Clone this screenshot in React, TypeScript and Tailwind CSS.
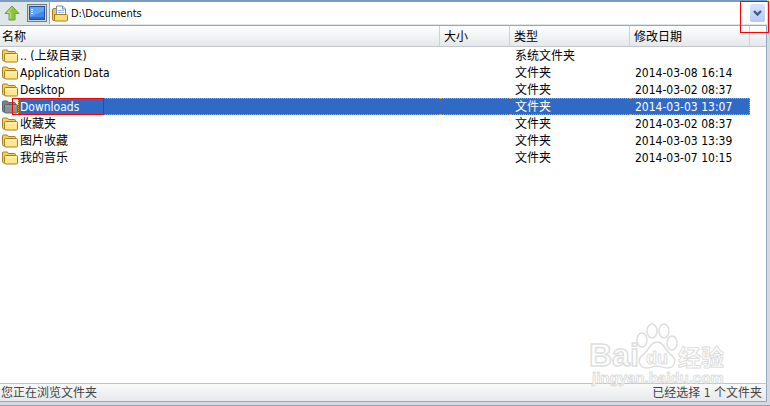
import React, { useState } from 'react';
import clsx from 'clsx';

interface Entry {
    name: string;
    type: string;
    modified?: string;
}

const ENTRIES: Entry[] = [
    { name: '.. (上级目录)', type: '系统文件夹' },
    { name: 'Application Data', type: '文件夹', modified: '2014-03-08 16:14' },
    { name: 'Desktop', type: '文件夹', modified: '2014-03-02 08:37' },
    { name: 'Downloads', type: '文件夹', modified: '2014-03-03 13:07' },
    { name: '收藏夹', type: '文件夹', modified: '2014-03-02 08:37' },
    { name: '图片收藏', type: '文件夹', modified: '2014-03-03 13:39' },
    { name: '我的音乐', type: '文件夹', modified: '2014-03-07 10:15' },
];

const UpIcon = () => (
    <svg width="16" height="16" viewBox="0 0 16 16">
        <path d="M8 1 L15 8.5 H11 V15 H5 V8.5 H1 Z" fill="#8cc63a" stroke="#6f9a3a" strokeLinejoin="round" />
        <path d="M8 2.6 L3.4 7.5 H6.2 V13.8" fill="none" stroke="#c6e58c" />
    </svg>
);

const DesktopIcon = () => (
    <svg width="20" height="18" viewBox="0 0 20 18">
        <rect x="0.5" y="0.5" width="19" height="17" fill="#d4d4d0" stroke="#77797b" />
        <rect x="2.5" y="2.5" width="15" height="13" fill="#3f8ae6" stroke="#1d4fa6" />
        <path d="M3 3 H17 V7 L3 13 Z" fill="#62a6f2" />
        <path d="M4 5.5 H6 M4 7.5 H6 M4 9.5 H6" stroke="#ffffff" />
        <path d="M3 14 H17" stroke="#1d4fa6" />
    </svg>
);

const DocumentsIcon = () => (
    <svg width="16" height="17" viewBox="0 0 16 17">
        <path d="M0.5 14 V5 Q0.5 3.5 2 3.5 H5 V15.5 H2 Q0.5 15.5 0.5 14 Z" fill="#f4c64c" stroke="#ad7a14" />
        <path d="M4.5 1 H10.5 L13.5 4 V11 H4.5 Z" fill="#ffffff" stroke="#6d8fc0" />
        <path d="M10.5 1 V4 H13.5" fill="#cfe0f5" stroke="#6d8fc0" />
        <path d="M6 5.5 H12 M6 7.5 H12" stroke="#9dbbe2" />
        <path d="M2.5 9.5 H14.5 Q15.5 9.5 15.5 10.5 V15 Q15.5 16 14.5 16 H3.5 Q2.5 16 2.5 15 Z" fill="#fbdf80" stroke="#ad7a14" />
    </svg>
);

const FolderIcon: React.FC<{ dimmed?: boolean }> = ({ dimmed }) => {
    const line = dimmed ? '#59656c' : '#a87f1c';
    return (
        <svg width="16" height="14" viewBox="0 0 16 14" className="shrink-0">
            <path
                d="M0.5 10.5 V2 Q0.5 1 1.5 1 H5 Q6 1 6.3 2.5 H12.5 Q13.5 2.5 13.5 3.5 V12 H2 Q0.5 12 0.5 10.5 Z"
                fill={dimmed ? '#77868d' : '#f6d05c'}
                stroke={line}
            />
            <path
                d="M3.5 4.5 H14.5 Q15.5 4.5 15.5 5.5 V12 Q15.5 13 14.5 13 H4 Q2.5 13 2.5 11.5 V5.5 Q2.5 4.5 3.5 4.5 Z"
                fill={dimmed ? '#84949b' : '#fde88f'}
                stroke={line}
            />
            <path d="M3.5 6 H14.5" stroke={dimmed ? '#94a3a9' : '#fff8cc'} />
        </svg>
    );
};

const Watermark = () => (
    <svg
        width="144"
        height="72"
        viewBox="0 0 144 72"
        className="pointer-events-none absolute right-[38px] bottom-[14px]"
        fill="#ffffff"
        stroke="#dedede"
        strokeWidth="1.5"
        strokeLinejoin="round"
        fontFamily="'Liberation Sans', 'Noto Sans CJK SC', sans-serif"
        fontWeight="bold"
    >
        <text x="4" y="46" fontSize="32">Bai</text>
        <ellipse cx="57" cy="20" rx="5" ry="7" />
        <ellipse cx="67" cy="11" rx="5" ry="7" />
        <ellipse cx="79" cy="11" rx="5" ry="7" />
        <ellipse cx="87" cy="23" rx="5" ry="7" />
        <path d="M72 22 C79 22 80 30 85 34 C93 39 90 48 82 48 C77 48 76 46 72 46 C68 46 67 48 62 48 C54 48 51 39 59 34 C64 30 65 22 72 22 Z" />
        <text x="61" y="44" fontSize="18" strokeWidth="1">du</text>
        <text x="93" y="46" fontSize="23" strokeWidth="1">经验</text>
        <text x="7" y="63" fontSize="15" strokeWidth="1">jingyan.baidu.com</text>
    </svg>
);

const HEAD = 'border-r border-[#cfd2d5] px-1 pt-[2px] pb-0 text-left font-normal';

export default function App() {
    const [path, setPath] = useState('D:\\Documents');
    const [selected, setSelected] = useState('Downloads');

    return (
        <div className="min-h-screen bg-[#d4dae0] pr-[3px] text-xs leading-4 text-black font-['DejaVu_Sans_Condensed','Noto_Sans_CJK_SC',sans-serif]">
            <div className="relative flex min-h-screen flex-col">
                {/* Address bar */}
                <div className="flex h-[26px] items-center border-y border-t-2 border-t-[#7a9dbf] border-b-[#9ba7ae] bg-[#dfe6ea] pb-px">
                    <button aria-label="向上" className="ml-1 mr-[7px]">
                        <UpIcon />
                    </button>
                    <button aria-label="桌面" className="mr-[2px]">
                        <DesktopIcon />
                    </button>
                    <div className="flex h-[22px] flex-1 items-center border-l border-[#9aa8b2] bg-white px-[2px]">
                        <DocumentsIcon />
                        <input
                            aria-label="地址"
                            value={path}
                            onChange={(e) => setPath(e.target.value)}
                            className="ml-[3px] min-w-0 flex-1 pt-[2px] text-[11px] outline-none"
                        />
                        <button
                            aria-label="展开"
                            className="flex h-[18px] w-[15px] items-center justify-center rounded-xs bg-linear-to-b from-[#d9e5fd] to-[#b5c9f7]"
                        >
                            <svg width="9" height="7" viewBox="0 0 9 7">
                                <path d="M1 1 L4.5 4.5 L8 1" fill="none" stroke="#46597f" strokeWidth="2.4" />
                            </svg>
                        </button>
                    </div>
                </div>

                {/* File list */}
                <div className="flex-1 border-r border-[#8fa9c6] bg-white">
                    <table className="w-full table-fixed border-separate border-spacing-0">
                        <colgroup>
                            <col />
                            <col className="w-[70px]" />
                            <col className="w-[120px]" />
                            <col className="w-[120px]" />
                            <col className="w-4" />
                        </colgroup>
                        <thead>
                            <tr className="h-5 bg-linear-to-b from-white to-[#e4e8ea] shadow-[0_1px_0_#c3c6c8]">
                                <th className="border-r border-[#cfd2d5] px-[2px] pt-[2px] pb-0 text-left font-normal">名称</th>
                                <th className={HEAD}>大小</th>
                                <th className={HEAD}>类型</th>
                                <th className={HEAD}>修改日期</th>
                                <td />
                            </tr>
                        </thead>
                        <tbody>
                            <tr className="h-px"><td colSpan={5} /></tr>
                            {ENTRIES.map((entry) => {
                                const active = entry.name === selected;
                                const cell = clsx(
                                    'h-[17px] border-y border-dotted pt-[2px] pb-0 leading-[13px] whitespace-nowrap',
                                    active ? 'border-[#ffa200] bg-[#316ac5] text-white' : 'border-transparent'
                                );
                                return (
                                    <tr key={entry.name} onClick={() => setSelected(entry.name)}>
                                        <td className="p-0">
                                            <div className="flex items-center pl-[2px]">
                                                <FolderIcon dimmed={active} />
                                                <span className={clsx(cell, 'flex-1 border-l pl-px')}>{entry.name}</span>
                                            </div>
                                        </td>
                                        <td className={cell} />
                                        <td className={clsx(cell, 'px-[5px]')}>{entry.type}</td>
                                        <td className={clsx(cell, 'border-r px-[5px]')}>{entry.modified}</td>
                                        <td />
                                    </tr>
                                );
                            })}
                        </tbody>
                    </table>
                </div>

                {/* Status bar */}
                <div className="flex h-[19px] items-center justify-between border-y border-r border-t-[#c3c3c3] border-r-[#8fa9c6] border-b-[#8fa9c6] bg-linear-to-b from-[#fafafa] to-[#e6e8ea] pl-px pr-1 pt-px text-[#444444]">
                    <span>您正在浏览文件夹</span>
                    <span>已经选择 1 个文件夹</span>
                </div>
                <div className="-mr-[3px] h-1 border-b border-[#8fa3b8] bg-[#d3dae2]" />

                <Watermark />

                {/* Highlight frames */}
                <div className="pointer-events-none absolute top-[98px] left-3 h-[17px] w-[92px] border border-[#ff0000]" />
                <div className="pointer-events-none absolute top-px -right-[2px] h-8 w-[29px] border border-[#ff0000]" />
            </div>
        </div>
    );
}
